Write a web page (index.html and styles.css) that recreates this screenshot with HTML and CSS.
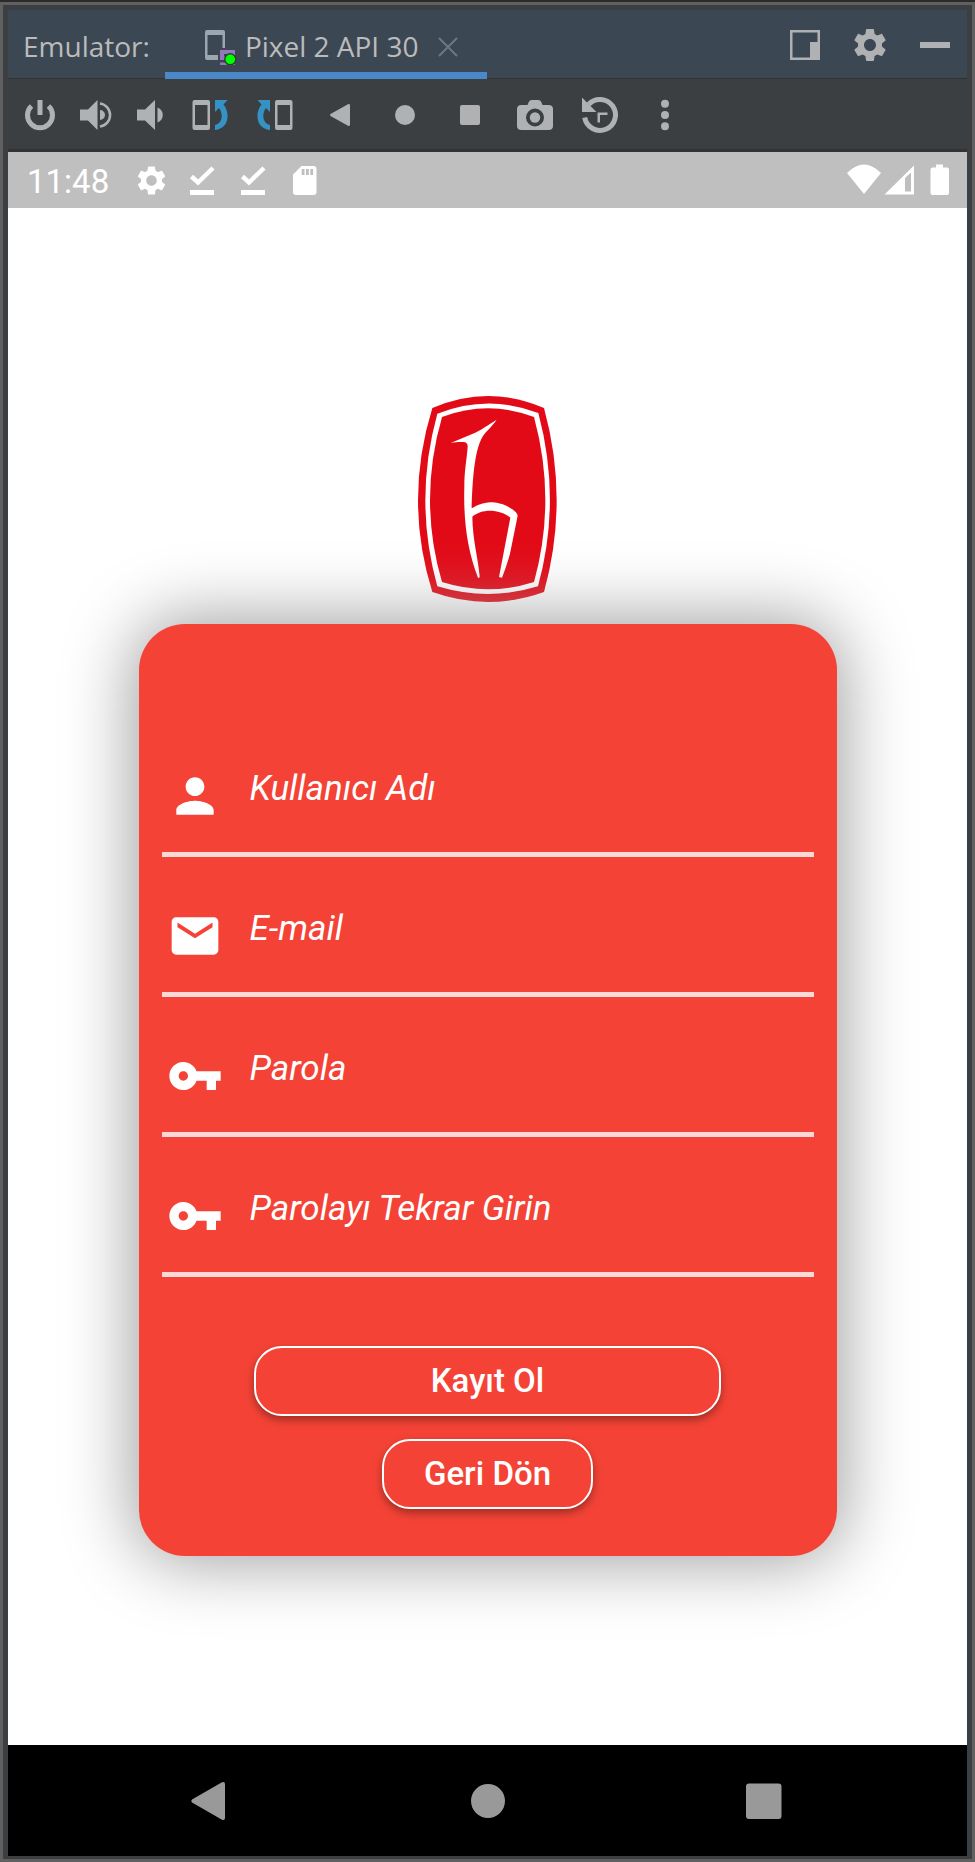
FILE: index.html
```html
<!DOCTYPE html>
<html lang="tr">
<head>
<meta charset="utf-8">
<meta name="viewport" content="width=device-width, initial-scale=1">
<title>Emulator</title>
<link rel="stylesheet" href="styles.css">
</head>
<body>
<div class="window">
  <header class="titlebar">
    <span class="titlebar-label">Emulator:</span>
    <div class="tab">
      <svg class="icon" viewBox="0 0 40 40" aria-hidden="true">
        <path fill="#9aa7b0" d="M7 5H23a2 2 0 0 1 2 2V23H22.500V10H7.500V30H18V35H7a2 2 0 0 1-2-2V7a2 2 0 0 1 2-2z"/>
        <path fill="#9876bd" fill-rule="evenodd" d="M20 25H35V35H20zM24 29V31.500H31V29zM20 37.500H35V40H20z"/>
        <circle cx="30.300" cy="34.300" r="6.200" fill="#1d4a2a"/>
        <circle cx="30.300" cy="34.300" r="4.800" fill="#00ff00"/>
      </svg>
      <span class="tab-name">Pixel 2 API 30</span>
      <button class="tab-close" type="button" aria-label="Close tab">
        <svg viewBox="0 0 20 20" aria-hidden="true"><path d="M1 1L19 19M19 1L1 19" stroke="#6c7780" stroke-width="2" fill="none"/></svg>
      </button>
    </div>
    <div class="titlebar-actions">
      <button type="button" aria-label="Layout"><svg class="icon" viewBox="0 0 40 40"><path fill-rule="evenodd" d="M5 5H35V35H5zM7.500 7.500V32.500H25V17H32.500V7.500z"/></svg></button>
      <button type="button" aria-label="Settings"><svg class="icon" viewBox="0 0 24 24"><use href="#gear"/></svg></button>
      <button type="button" aria-label="Hide"><svg class="icon" viewBox="0 0 40 40"><path d="M5 17H35V23H5z"/></svg></button>
    </div>
  </header>

  <div class="toolbar">
    <div class="tools tools-sound">
      <button type="button" aria-label="Power"><svg class="icon" viewBox="0 0 40 40"><path d="M17.500 5h5v15h-5z"/><path d="M11.500 11A12.500 12.500 0 1 0 28.500 11" fill="none" stroke="#afb1b3" stroke-width="5"/></svg></button>
      <button type="button" aria-label="Volume up"><svg class="icon" viewBox="0 0 40 40"><path d="M5 14.500H13L22.500 5V35L13 25.500H5zM25 15a5 5 0 0 1 0 10z"/><path d="M25 8.500A11.600 11.600 0 0 1 25 31.500" fill="none" stroke="#afb1b3" stroke-width="2.500"/></svg></button>
      <button type="button" aria-label="Volume down"><svg class="icon" viewBox="0 0 40 40"><path d="M7 14.500H15L25 5V35L15 25.500H7zM27.500 12.500C34.500 14.500 34.500 25.500 27.500 27.500z"/></svg></button>
    </div>
    <div class="tools">
      <button type="button" aria-label="Rotate left"><svg class="icon" viewBox="0 0 40 40"><g id="rotate"><path fill-rule="evenodd" d="M4.500 5H18a2 2 0 0 1 2 2V33a2 2 0 0 1-2 2H4.500a2 2 0 0 1-2-2V7a2 2 0 0 1 2-2zM5 10V30H17.500V10z"/><path fill="#3592c4" d="M25 5H37.500L33.500 9.500C40.500 18 39 33.500 25 35V30C32.500 28 33.500 19 29 13L25 17z"/></g></svg></button>
      <button type="button" aria-label="Rotate right"><svg class="icon" viewBox="0 0 40 40"><use href="#rotate" transform="matrix(-1 0 0 1 40 0)"/></svg></button>
      <button type="button" aria-label="Back"><svg class="icon" viewBox="0 0 40 40"><path d="M10.500 19L28 9.200Q30 8.500 30 10.500V29.500Q30 31.500 28 30.800L10.500 21Q9.500 20 10.500 19z"/></svg></button>
      <button type="button" aria-label="Home"><svg class="icon" viewBox="0 0 40 40"><circle cx="20" cy="20" r="10"/></svg></button>
      <button type="button" aria-label="Overview"><svg class="icon" viewBox="0 0 40 40"><rect x="10" y="10" width="20" height="20" rx="2"/></svg></button>
      <button type="button" aria-label="Screenshot"><svg class="icon" viewBox="0 0 40 40"><path fill-rule="evenodd" d="M6.500 10H12.500L14 6.500Q14.800 5 16.500 5H23.500Q25.200 5 26 6.500L27.500 10H33.500Q38 10 38 14V31Q38 35 33.500 35H6.500Q2 35 2 31V14Q2 10 6.500 10zM20 13.500a9 9 0 1 0 0 18a9 9 0 1 0 0-18z"/><circle cx="20" cy="22.500" r="5.200"/></svg></button>
      <button type="button" aria-label="Snapshots"><svg class="icon" viewBox="0 0 40 40"><path d="M2 2.500L16.500 17H2zM17.500 17.500H27.500V20H20V27.500H17.500z"/><path d="M4.700 22.500A15.500 15.500 0 1 0 8.500 9.500" fill="none" stroke="#afb1b3" stroke-width="5"/></svg></button>
      <button type="button" aria-label="More"><svg class="icon" viewBox="0 0 40 40"><circle cx="20" cy="8.700" r="4"/><circle cx="20" cy="20" r="4"/><circle cx="20" cy="31.300" r="4"/></svg></button>
    </div>
  </div>

  <div class="device">
    <div class="statusbar">
      <time class="clock">11:48</time>
      <div class="notifications">
        <svg viewBox="0 0 24 24" aria-hidden="true"><path id="gear" d="M19.140 12.940c.04-.3.06-.61.06-.94 0-.32-.02-.64-.07-.94l2.030-1.580c.18-.14.23-.41.12-.61l-1.920-3.320c-.12-.22-.37-.29-.59-.22l-2.390.96c-.5-.38-1.030-.7-1.620-.94l-.36-2.540c-.04-.24-.24-.41-.48-.41h-3.840c-.24 0-.43.17-.47.41l-.36 2.540c-.59.24-1.130.57-1.620.94l-2.390-.96c-.22-.08-.47 0-.59.22L2.740 8.870c-.12.21-.08.47.12.61l2.030 1.580c-.05.3-.09.63-.09.94s.02.64.07.94l-2.030 1.580c-.18.14-.23.41-.12.61l1.920 3.320c.12.22.37.29.59.22l2.390-.96c.5.38 1.030.7 1.620.94l.36 2.540c.05.24.24.41.48.41h3.840c.24 0 .44-.17.47-.41l.36-2.540c.59-.24 1.130-.56 1.620-.94l2.390.96c.22.08.47 0 .59-.22l1.920-3.320c.12-.22.07-.47-.12-.61l-2.010-1.580zM12 15.600c-1.980 0-3.600-1.620-3.600-3.600s1.620-3.600 3.600-3.600 3.600 1.620 3.600 3.600-1.620 3.600-3.600 3.600z"/></svg>
        <svg viewBox="0 0 35 35" aria-hidden="true"><g id="done"><path d="M6.500 13.500L13 19.500L28 5" fill="none" stroke="#fff" stroke-width="4.500"/><path d="M5 27H29V32H5z"/></g></svg>
        <svg viewBox="0 0 35 35" aria-hidden="true"><use href="#done"/></svg>
        <svg viewBox="0 0 35 35" aria-hidden="true"><path fill-rule="evenodd" d="M14.500 3H26.500a3 3 0 0 1 3 3V29a3 3 0 0 1-3 3H9a3 3 0 0 1-3-3V11.500zM14.700 6V12H17.500V6zM19 6V12H21.800V6zM23.300 6V12H26.100V6z"/></svg>
      </div>
      <div class="signals">
        <svg viewBox="0 0 35 35" aria-hidden="true"><path d="M1 10Q18-7 35 10L18 31z"/></svg>
        <svg viewBox="0 0 35 35" aria-hidden="true"><path fill-rule="evenodd" d="M.5 31.500L30 2.500V31.500zM21 15V28.500H27V9.500z"/></svg>
        <svg viewBox="0 0 35 35" aria-hidden="true"><path d="M14 1.500H21V4.500H25a2 2 0 0 1 2 2V30a2 2 0 0 1-2 2H10.500a2 2 0 0 1-2-2V6.500a2 2 0 0 1 2-2H14z"/></svg>
      </div>
    </div>

    <main class="screen">
      <svg class="logo" viewBox="54 47 417 618" role="img" aria-label="Logo">
        <path fill="#e30a17" d="M97 83Q265 11 432 83Q508 360 432 635Q265 695 97 635Q11 360 97 83z"/>
        <path fill="#fff" d="M112 100Q265 40 415 98Q485 360 414 618Q265 664 112 618Q40 360 112 100z"/>
        <path fill="#e30a17" d="M126 110Q265 58 402 110Q470 360 402 605Q265 649 126 605Q54 360 126 110z"/>
        <path fill="#fff" d="M290 118C265 133 245 149 215 162L152 188C172 184 187 184 196 186Q204 190 203 200C200 240 193 270 193 320C190 420 202 510 234 592Q238 596 239 588C234 530 218 480 217 409C243 385 298 384 331 412L297 590L306 592Q322 550 330 520L353 406Q353 402 347 395C322 372 290 366 272 366C248 367 232 375 215 384C217 310 222 220 244 176C254 155 273 143 290 118z"/>
      </svg>

      <form class="card">
        <label class="field">
          <svg class="field-icon" viewBox="0 0 24 24" aria-hidden="true"><path d="M12 12c2.210 0 4-1.790 4-4s-1.790-4-4-4-4 1.790-4 4 1.790 4 4 4zm0 2c-2.670 0-8 1.340-8 4v2h16v-2c0-2.660-5.330-4-8-4z"/></svg>
          <input type="text" placeholder="Kullanıcı Adı" aria-label="Kullanıcı Adı">
        </label>
        <label class="field">
          <svg class="field-icon" viewBox="0 0 24 24" aria-hidden="true"><path d="M20 4H4c-1.100 0-1.990.9-1.990 2L2 18c0 1.100.9 2 2 2h16c1.100 0 2-.9 2-2V6c0-1.100-.9-2-2-2zm-.5 4.250L12 13 4.500 8.250V6.250L12 11l7.500-4.750z"/></svg>
          <input type="email" placeholder="E-mail" aria-label="E-mail">
        </label>
        <label class="field">
          <svg class="field-icon" viewBox="0 0 24 24" aria-hidden="true"><path id="key" d="M12.650 10C11.830 7.670 9.610 6 7 6c-3.310 0-6 2.690-6 6s2.690 6 6 6c2.610 0 4.830-1.670 5.650-4H17v4h4v-4h2v-4H12.650zM7 14c-1.100 0-2-.9-2-2s.9-2 2-2 2 .9 2 2-.9 2-2 2z"/></svg>
          <input type="password" placeholder="Parola" aria-label="Parola">
        </label>
        <label class="field">
          <svg class="field-icon" viewBox="0 0 24 24" aria-hidden="true"><use href="#key"/></svg>
          <input type="password" placeholder="Parolayı Tekrar Girin" aria-label="Parolayı Tekrar Girin">
        </label>
        <div class="actions">
          <button class="pill pill-wide" type="button">Kayıt Ol</button>
          <button class="pill" type="button">Geri Dön</button>
        </div>
      </form>
    </main>

    <nav class="navbar">
      <button type="button" aria-label="Back"><svg class="icon" viewBox="0 0 40 40"><path d="M2 18.500L32 1.300Q35 .5 35 3V37Q35 39.500 32 38.700L2 21.500Q.5 20 2 18.500z"/></svg></button>
      <button type="button" aria-label="Home"><svg class="icon" viewBox="0 0 40 40"><circle cx="20" cy="20" r="17"/></svg></button>
      <button type="button" aria-label="Overview"><svg class="icon" viewBox="0 0 40 40"><rect x="1" y="2.500" width="35.500" height="35.500" rx="3"/></svg></button>
    </nav>
  </div>
</div>
</body>
</html>
```

FILE: styles.css
```css
* {
  box-sizing: border-box;
}

body {
  margin: 0;
  background: #2b2b2b;
  font-family: Roboto, "Liberation Sans", sans-serif;
}

button {
  margin: 0;
  padding: 0;
  border: 0;
  background: none;
  font: inherit;
  color: inherit;
  cursor: pointer;
}

svg {
  display: block;
  flex: none;
}

.icon {
  width: 40px;
  height: 40px;
}

.window {
  display: flex;
  flex-direction: column;
  min-height: 100vh;
  border-top: 2px solid #2b2b2b;
  background: #3c3f41;
  box-shadow: inset 0 0 0 3px #606060;
  padding: 8px 8px 6px;
}

/* Title bar */

.titlebar {
  display: flex;
  align-items: stretch;
  height: 69px;
  padding: 0 12px 0 15px;
  background: #3c4754;
  border-bottom: 1px solid #323232;
  color: #bbbbbb;
  fill: #afb1b3;
  font-family: "Open Sans", "Noto Sans", sans-serif;
  font-size: 28px;
  line-height: 40px;
}

.titlebar-label {
  padding-top: 16px;
}

.tab {
  display: flex;
  align-items: flex-start;
  margin: 0 auto -1px 15px;
  padding: 15px 29px 0 35px;
  border-bottom: 7px solid #4a88c7;
}

.tab-name {
  margin: 1px 20px 0 5px;
}

.tab-close {
  padding: 12px 0;
}

.tab-close svg {
  width: 20px;
  height: 20px;
}

.titlebar-actions {
  display: flex;
  align-items: center;
  gap: 25px;
  padding-top: 2px;
}

/* Emulator tools */

.toolbar {
  display: flex;
  align-items: center;
  gap: 20px;
  height: 73px;
  padding: 2px 12px 0;
  border-bottom: 3px solid #313335;
  fill: #afb1b3;
}

.tools {
  display: flex;
  gap: 25px;
}

.tools-sound {
  gap: 15px;
}

/* Device */

.device {
  display: flex;
  flex: 1;
  flex-direction: column;
  background: #fff;
}

.statusbar {
  display: flex;
  align-items: center;
  height: 56px;
  padding: 0 10px 0 19px;
  background: #bfbfbf;
  color: #fff;
  fill: #fff;
}

.statusbar svg {
  width: 35px;
  height: 35px;
}

.clock {
  padding-top: 3px;
  font-size: 33px;
  line-height: 40px;
}

.notifications {
  display: flex;
  gap: 16px;
  margin: 0 auto 0 25px;
}

.signals {
  display: flex;
  gap: 3px;
}

.screen {
  display: flex;
  flex: 1;
  flex-direction: column;
  align-items: center;
  justify-content: center;
  gap: 22px;
  padding-bottom: 1px;
}

.logo {
  width: 139px;
  height: 206px;
}

.card {
  width: 73%;
  max-width: 698px;
  padding: 93px 23px 47px;
  border-radius: 46px;
  background: #f44336;
  box-shadow: 0 0 70px 5px #9e9e9e;
  color: #fff;
  fill: #fff;
}

.field {
  display: flex;
  align-items: center;
  gap: 27px;
  padding: 51px 5px 28px;
  border-bottom: 5px solid #fcd9d7;
}

.field-icon {
  width: 56px;
  height: 56px;
}

.field input {
  flex: 1;
  min-width: 0;
  height: 56px;
  padding: 0 0 15px;
  border: 0;
  outline: 0;
  background: none;
  color: #fff;
  font: italic 35px/41px Roboto, "Liberation Sans", sans-serif;
}

.field input::placeholder {
  color: #fff;
  opacity: 1;
}

.actions {
  display: flex;
  flex-direction: column;
  align-items: center;
  gap: 23px;
  padding-top: 69px;
}

.pill {
  height: 70px;
  padding: 0 40px;
  border: 2px solid #fff;
  border-radius: 28px;
  background: #f44336;
  box-shadow: 0 4px 8px rgba(0, 0, 0, 0.35);
  font-size: 33px;
  font-weight: 500;
  line-height: 40px;
}

.pill-wide {
  width: 467px;
  max-width: 100%;
}

.navbar {
  display: flex;
  align-items: center;
  justify-content: space-between;
  height: 111px;
  padding: 0 19%;
  background: #000;
  fill: #999;
}
```
